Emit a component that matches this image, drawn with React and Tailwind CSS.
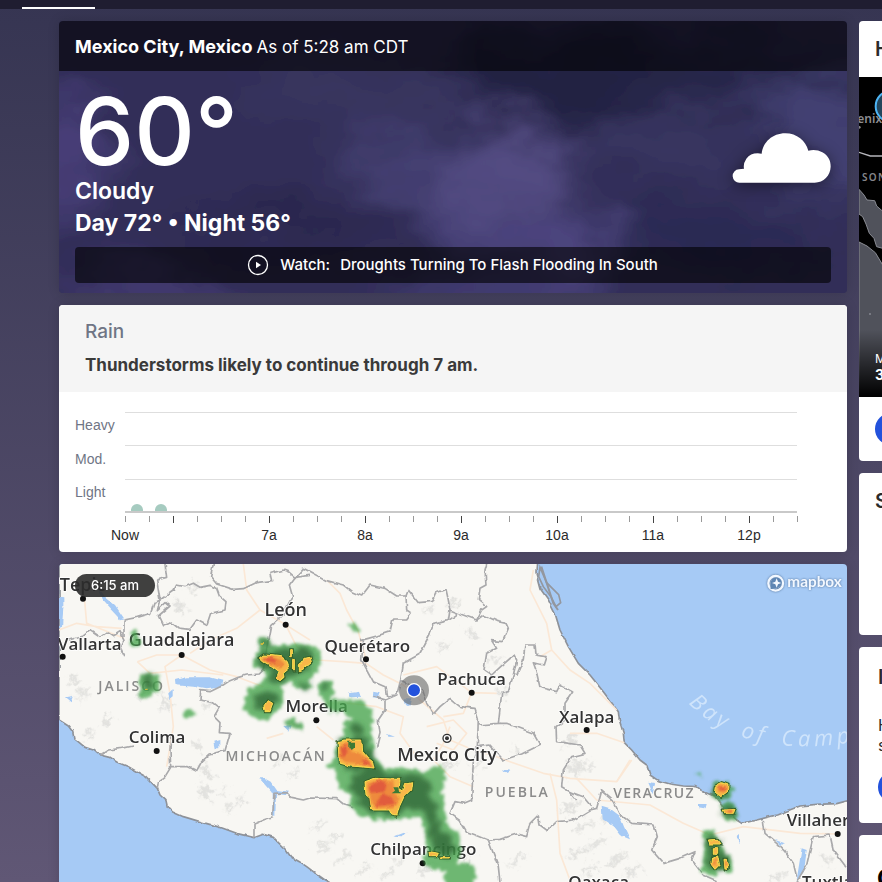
import React from "react";

const TICKS = Array.from({ length: 29 }, (_, i) => i);
const HOURS = [
  ["Now", 66],
  ["7a", 210],
  ["8a", 306],
  ["9a", 402],
  ["10a", 498],
  ["11a", 594],
  ["12p", 690],
];
const LEVELS = [
  ["Heavy", 38],
  ["Mod.", 72],
  ["Light", 105],
];

// [name, centre x, baseline, size]
const CITIES = [
  ["Tepic", 98, 92, 54],
  ["León", 707, 168, 54],
  ["Guadalajara", 395, 258, 54],
  ["Vallarta", 119, 271, 51],
  ["Querétaro", 952, 277, 51],
  ["Pachuca", 1265, 374, 51],
  ["Morella", 800, 457, 51],
  ["Colima", 321, 548, 51],
  ["Mexico City", 1191, 602, 54],
  ["Xalapa", 1610, 490, 51],
  ["Chilpancingo", 1120, 886, 51],
  ["Oaxaca", 1646, 984, 51],
];
const STATES = [
  ["JALISCO", 245, 392, 6],
  ["MICHOACÁN", 678, 602, 5],
  ["PUEBLA", 1402, 711, 6],
  ["VERACRUZ", 1812, 715, 4],
];
const DOTS = [
  [99, 116], [707, 194], [395, 285], [38, 290], [948, 298], [1265, 398],
  [799, 481], [320, 573], [1610, 510], [1118, 910], [2363, 822],
];

const LAND =
  "M27 0V480L55 498L68 515L72 535L88 548L105 562L130 570L150 585L178 592L200 606L235 620L262 636L290 652L322 685L330 705L348 722L352 740L368 756L400 770L450 785L510 802L560 820L612 833L640 823L670 832L685 848L708 870L722 890L748 905L770 920L790 935L825 960L880 990L1000 1040L1160 1100L1300 1180L1500 1240L1700 1320H2400V720L2360 731L2300 733L2250 738L2180 765L2120 780L2075 790L2060 780L2020 740L2000 712L1985 705L1960 695L1940 680L1900 678L1860 672L1825 662L1800 645L1790 615L1770 600L1745 570L1723 548L1720 520L1708 480L1705 455L1690 435L1660 395L1620 345L1585 310L1555 260L1530 210L1515 160L1495 120L1470 85L1458 40L1460 0Z";

const BORDERS = [
  "M222 290L210 262L222 238L210 215L190 228L172 216L150 232L120 212L100 228L60 240M222 228V180L262 172L302 160L312 130L330 120L322 152L348 128L360 138L325 168L338 195L362 186L385 204L420 208L440 180L470 196L482 160L525 150L528 125L508 108L500 86L480 76L450 82L430 70L405 80L380 75L372 90L330 120L320 60L350 52L345 12",
  "M490 12L482 50L500 72L550 88L580 86L618 68L665 62L660 40L700 30L716 36L735 52L780 46M735 52L718 75L728 110L700 165L662 200L655 235L640 330L628 342L590 345L565 352L540 362L515 378L480 395L452 392L450 420L490 428L508 442L492 470L510 488L508 518L540 520L525 572L480 582L455 605L440 632L415 620L362 620L360 570L362 530M362 622L345 650L325 665L322 685M150 585L175 570L215 565L250 558",
  "M612 833L612 792L640 780L668 770L672 700L712 698L722 712L760 720L780 714L860 716L880 732L910 740",
  "M735 52L760 25L830 62L880 75L905 95L935 108L960 75L1005 85L1040 108L1068 108L1075 90L1105 128L1148 124L1160 98L1188 88L1195 120L1200 150L1225 160L1280 180L1295 150L1310 140L1285 118L1290 85L1308 75L1305 30L1310 12",
  "M1068 108L1070 150L1085 160L1070 180L1028 180L1020 215L980 228L955 235L930 242M1200 150L1195 182L1148 194L1140 225L1110 282L1060 310L1052 360L1040 405L1010 408L1005 380L970 365L935 300L940 242",
  "M1052 360L1090 380L1118 390L1130 430L1150 462L1170 440L1200 415L1215 428L1230 440L1275 445L1285 478L1282 560L1270 600L1265 720L1242 730L1215 725L1200 760L1230 782L1250 815L1285 828L1315 840L1345 920L1350 966L1340 1200",
  "M1195 182L1225 160M1280 180L1300 165L1345 185L1368 190L1375 205L1358 245L1325 242L1340 265L1310 280L1302 330L1325 345L1352 320L1392 285L1400 300L1390 345L1375 395L1355 400L1350 445L1345 490L1285 495",
  "M1400 345L1420 298L1425 255L1455 255L1458 285L1488 290L1480 315L1450 308L1458 330L1470 382L1520 395L1530 375L1568 396L1545 430L1545 480L1518 500L1520 545L1590 555L1605 580L1565 590L1540 630L1535 680L1560 695L1580 720",
  "M1282 560L1320 555L1360 600L1415 582L1470 555L1450 520L1370 490L1345 490M1040 405L1005 420L1005 450L985 480L990 520L980 560M1005 420L970 410",
  "M1315 840L1350 838L1400 822L1430 830L1440 790L1465 765L1470 795L1492 812L1520 785L1570 780L1620 750L1640 745L1655 690L1690 720L1712 765L1745 790L1812 795L1822 830L1805 870L1840 910L1890 895L1935 875L1925 900L1960 945L2000 962",
  "M1560 695L1600 710L1625 740M2140 780L2145 820L2180 850L2205 875L2230 910L2240 950M2240 966L2270 915L2290 830L2340 825L2350 870L2391 925",
];

const ROADS = [
  "M27 210L80 190L140 200L215 205M100 80L110 190L222 235M262 305L320 285L395 285L480 330L560 350L640 380M395 285L345 320L360 400L370 500L350 620M580 12L590 90L630 150L560 205L480 240L420 280M630 150L700 190L780 240M262 305L300 340L395 330L520 345",
  "M707 194L740 260L800 300L880 305L948 310L1000 345L1060 375L1110 420L1180 480L1200 540M830 60L870 100L890 150L925 215L948 298M800 430L900 430L980 440L1060 470L1050 520L1100 590M700 520L650 535M800 500L850 540",
  "M1180 470L1240 460L1265 398L1340 400M1200 540L1270 570L1340 590L1380 605L1480 640L1560 655L1700 665L1740 600M1200 500L1180 550L1150 600L1200 650L1270 680M1130 500L1210 480L1250 520L1210 570L1160 550M1060 345L1160 320L1265 398",
  "M1450 30L1440 90L1490 190L1505 270L1560 330L1620 370L1700 450M1505 270L1470 290M1580 655L1640 720L1800 735L1900 790L1980 825L2080 800L2250 820L2363 822M1745 600L1700 665M1560 520L1640 520L1723 548M1500 640L1520 720L1530 880L1560 960",
];

const LAKES = [
  "M378 360L410 352H480L520 362L515 382L470 388L430 380L380 376Z",
  "M27 110L40 112V140L36 200L27 205Z",
  "M640 655L665 668L680 690L720 695L712 706L678 702L676 768L668 765V700L650 680L628 655Z",
  "M355 400L368 388V412L358 420Z",
  "M1655 740L1680 748L1710 770L1722 800L1740 838L1710 826L1690 800L1658 778Z",
  "M140 75L165 110L195 135L222 175L210 178L182 148L155 118Z",
  "M895 400L930 395L935 410L900 412ZM970 395L992 400L985 418L968 415ZM1030 830L1070 815L1055 832ZM1355 628L1382 632L1370 642ZM1946 732H1970L1966 748L1948 745ZM490 545L508 540V565H494ZM48 412L68 408L62 424ZM2175 840L2205 850L2190 855ZM2060 830L2070 822V850ZM700 498L725 495L718 515Z",
  "M1062 415H1084L1078 438L1068 432ZM1012 522L1035 530L1015 530ZM1795 668L1815 672L1808 700ZM2255 865L2270 870L2262 935L2240 960Z",
];

const HILLS = [
  [70, 360, 22, 9], [100, 400, 30, 8], [170, 480, 22, 10], [120, 520, 16, 8], [280, 400, 20, 10], [345, 425, 12, 30], [470, 640, 10, 28],
  [465, 700, 12, 26], [540, 745, 16, 8], [520, 690, 12, 6], [470, 440, 18, 8], [440, 560, 10, 16], [390, 140, 12, 26], [430, 85, 18, 8],
  [570, 720, 16, 6], [730, 640, 24, 8], [690, 600, 20, 8], [1210, 130, 18, 9], [1130, 150, 16, 7], [1265, 220, 10, 22],
  [1180, 255, 14, 8], [1330, 300, 20, 8], [1350, 400, 9, 18], [1280, 620, 24, 8], [1200, 615, 30, 8], [1400, 570, 12, 12],
  [1560, 540, 22, 12], [1570, 630, 12, 28], [1585, 610, 10, 20], [1560, 745, 28, 10], [1600, 800, 30, 9], [1640, 850, 34, 9], [1700, 900, 34, 10],
  [1580, 880, 30, 10], [1750, 930, 30, 10], [1620, 930, 26, 9], [820, 860, 24, 7], [880, 890, 30, 7], [940, 930, 30, 7], [1010, 940, 26, 7],
  [1050, 900, 20, 6], [1120, 930, 26, 8], [800, 800, 26, 6], [860, 830, 22, 6], [1250, 900, 16, 8], [1400, 900, 30, 8], [2180, 950, 30, 8],
  [2330, 900, 12, 18], [1620, 620, 18, 7], [1660, 780, 10, 6],
];

const RAIN_LIGHT =
  "M625 235L640 226L660 238L662 255L740 256L795 254L810 290L808 320L790 350L775 360L785 385L765 395L735 380L725 362L690 375L700 400L695 440L670 462L655 482L630 478L600 470L580 455L582 420L600 385L635 370L650 340L614 320L612 280L630 272ZM240 220L260 214L270 240L262 260L244 255ZM272 345L300 336L325 352L328 390L305 404L275 414L262 410L275 390L264 372ZM400 460L425 452L442 466L405 473ZM705 480L730 476L762 500L758 515L735 508L708 494Z" +
  "M898 192L915 188L932 208L928 216L902 206ZM800 370L840 362L850 395L838 420L900 418L938 424L965 450L970 480L960 510L965 545L975 590L1000 625L1080 622L1120 640L1148 628L1175 612L1185 650L1178 700L1188 770L1195 800L1228 815L1232 870L1225 910L1272 912L1276 966L1260 1010H1200L1182 960L1190 930L1145 925L1120 905L1132 840L1108 770L1040 778L990 782L930 770L895 735L910 710L862 675L858 630L825 620L850 590L862 550L880 530L882 490L905 478L890 455L840 460L820 420Z" +
  "M1932 640L1956 642L1948 650ZM1990 665H2035L2050 690L2035 712L2010 725L1988 705ZM2005 735L2040 728L2060 745L2065 775L2048 785L2025 770ZM1958 812L1985 805L2000 830L2015 850L2020 875L2042 890L2050 940L2020 935L1990 945L1955 935L1962 880L1965 840Z";

const RAIN_DARK =
  "M622 288L660 272L700 266L780 266L795 300L780 326L750 342L720 348L680 368L655 362L660 335L622 312ZM632 238L655 236L652 258L636 256ZM615 420L635 395L675 400L678 430L652 455L625 450ZM284 350L305 340L312 370L300 385L280 390ZM745 362L775 365L770 388L750 385ZM716 488L745 490L752 508ZM1030 645L1105 642L1130 665L1155 740L1170 810L1210 830L1208 870L1190 895L1155 870L1140 830L1128 760L1080 742L1050 764L980 762L935 740L915 715L900 690L905 650L940 635L885 622L865 595L868 540L945 530L955 560L975 610L1000 640ZM905 495L940 498L935 520L905 522ZM815 370L838 368L835 388L815 385ZM1998 672L2030 668L2038 695L2020 715L1995 700ZM2015 742L2052 740L2050 765L2020 765ZM1968 830L1990 820L2010 850L2012 870L2032 890L2038 925L2010 932L1975 930L1970 880Z";

const RAIN_YELLOW =
  "M628 294L640 285L660 286L695 290L712 305L718 325L700 340L702 352L690 362L680 355L688 335L665 318L640 305ZM722 266H727V290H722ZM728 298H733V330H728ZM748 318L765 295L780 292L784 305L760 325L748 332ZM642 440L655 422L668 430L660 452L645 452ZM864 545L885 540H935L938 575L955 595L968 605L972 624L930 620L900 618L868 610ZM945 665L975 655L1050 658L1048 682L1060 690L1068 672L1085 668L1082 690L1062 710L1048 740L1040 768L1025 765L1018 750L965 750L960 715L948 705ZM1140 875L1165 880L1160 890H1142ZM1172 890H1198V894H1172ZM1996 678L2015 668L2034 675L2032 695L2012 710L1994 695ZM2020 750L2055 748L2050 760L2025 760ZM1975 840L2000 838L2010 852L1980 852ZM1990 866H2003V880H1990ZM1988 890L2003 888L2008 915L1995 928L1985 915ZM2022 898H2032L2036 920L2025 928Z";

const RAIN_ORANGE =
  "M638 294L660 290L690 298L705 312L690 326L660 312ZM870 555L900 548L905 575L930 578L945 598L962 610L930 612L885 606L868 590ZM952 672L990 660L1030 664L1034 700L1050 715L1030 742L985 745L965 735L958 700ZM2004 676L2030 678L2024 698L2004 694ZM2026 751H2048L2042 758H2030ZM1992 895L2000 895L2001 915L1992 915ZM2025 905H2031V918H2025Z";

const RAIN_RED =
  "M640 296L660 292L680 300L675 308L655 306ZM872 565L888 556L892 578L878 590ZM935 600L950 598L970 620L945 612ZM955 680L985 662L1010 672L1002 696L965 698ZM1000 700L1025 712L1035 732L975 738ZM2010 680H2028L2022 690H2008ZM2030 752H2044L2038 757Z";

function Sky() {
  return (
    <svg className="absolute inset-0 h-full w-full" viewBox="0 0 788 272" preserveAspectRatio="none" aria-hidden="true">
      <defs>
        <filter id="cloud" x="-30%" y="-30%" width="160%" height="160%">
          <feGaussianBlur stdDeviation="18" result="b" />
          <feTurbulence type="fractalNoise" baseFrequency="0.011 0.018" numOctaves="5" seed="4" result="n" />
          <feDisplacementMap in="b" in2="n" scale="90" xChannelSelector="R" yChannelSelector="G" />
          <feGaussianBlur stdDeviation="2" />
        </filter>
      </defs>
      <rect width="788" height="272" fill="#322f58" />
      <g filter="url(#cloud)">
        <rect x="-80" y="-80" width="948" height="432" fill="#322f58" />
        <ellipse cx="540" cy="60" rx="170" ry="50" fill="#232342" />
        <ellipse cx="700" cy="50" rx="120" ry="26" fill="#27274a" />
        <ellipse cx="290" cy="70" rx="110" ry="30" fill="#39365f" />
        <ellipse cx="0" cy="135" rx="40" ry="60" fill="#463c77" />
        <ellipse cx="390" cy="150" rx="110" ry="40" fill="#444072" />
        <ellipse cx="445" cy="145" rx="60" ry="42" fill="#524c82" />
        <ellipse cx="600" cy="120" rx="90" ry="34" fill="#393661" />
        <ellipse cx="460" cy="215" rx="80" ry="28" fill="#49437a" />
        <ellipse cx="510" cy="235" rx="70" ry="18" fill="#4f4782" />
        <ellipse cx="765" cy="110" rx="60" ry="60" fill="#433f72" />
        <ellipse cx="660" cy="215" rx="110" ry="28" fill="#2a2a52" />
        <ellipse cx="240" cy="205" rx="120" ry="22" fill="#2a274d" />
        <ellipse cx="90" cy="280" rx="90" ry="22" fill="#443b73" />
        <ellipse cx="440" cy="280" rx="120" ry="16" fill="#47417a" />
      </g>
    </svg>
  );
}

function CurrentConditions() {
  return (
    <section className="relative overflow-hidden rounded text-white shadow-[0_0_12px_rgba(0,0,0,0.15)]">
      <Sky />
      <div className="relative">
        <header className="flex h-[50px] items-baseline gap-1 bg-black/60 px-4 pt-3">
          <h1 className="text-lg font-bold">Mexico City, Mexico</h1>
          <span className="text-[17px]">As of 5:28 am CDT</span>
        </header>
        <div className="flex items-center justify-between px-4 pt-4">
          <div>
            <div className="h-[88px] text-[94px] leading-[88px] font-medium">60°</div>
            <div className="h-8 text-[23px] leading-8 font-semibold">Cloudy</div>
            <div className="h-8 text-[23px] leading-8 font-bold">Day 72° • Night 56°</div>
          </div>
          <svg className="mb-2.5 h-[50px] w-[98px] overflow-visible drop-shadow-[0_2px_8px_rgba(0,0,0,0.45)]" viewBox="0 0 294 150" role="img" aria-label="Cloudy">
            <path
              fill="#fff"
              d="M20 149A20 20 0 0 1 18 109Q24 108 33 107Q30 92 40 77Q55 57 86 62C90 28 118 1 157 1C192 1 218 24 226 53Q250 48 268 58C286 68 293 83 293 101C292 128 272 148 245 149Z"
            />
          </svg>
        </div>
        <div className="px-4 pt-2 pb-2.5">
          <button type="button" className="flex h-9 w-full items-center justify-center rounded bg-black/60 text-[15px] font-medium">
            <svg className="h-5 w-5 overflow-visible" viewBox="0 0 20 20" aria-hidden="true">
              <circle cx="10" cy="10" r="9.5" fill="none" stroke="#fff" strokeWidth="1.3" />
              <path d="M8 6.8V13.2L13 10Z" fill="#fff" />
            </svg>
            <span className="ml-3">Watch:</span>
            <span className="ml-2.5">Droughts Turning To Flash Flooding In South</span>
          </button>
        </div>
      </div>
    </section>
  );
}

function RainCard() {
  return (
    <section className="overflow-hidden rounded bg-white shadow-[0_0_12px_rgba(0,0,0,0.15)]">
      <header className="h-[87px] bg-[#f5f5f5] px-[26px] pt-3">
        <h2 className="text-[19px] leading-[30px] font-medium text-[#6f7585]">Rain</h2>
        <p className="pt-1 text-[17px] leading-7 font-bold text-[#3a3a3a]">Thunderstorms likely to continue through 7 am.</p>
      </header>
      <svg className="block w-full font-['Liberation_Sans',Arial,sans-serif] text-sm" viewBox="0 0 788 160" role="img" aria-label="Rain intensity">
        <path d="M66 20.5H738M66 53.5H738M66 87.5H738" stroke="#dedede" />
        <path d="M72 121V118A6 6 0 0 1 84 118V121ZM96 121V118A6 6 0 0 1 108 118V121Z" fill="#a6cbc0" />
        <path d="M66 120H738" stroke="#c9c9c9" strokeWidth="2" />
        {TICKS.map((i) => (
          <path key={i} d={`M${66.5 + i * 24} 124V${i % 4 === 2 ? 131 : 130}`} stroke={i % 4 === 2 ? "#444" : "#999"} />
        ))}
        {LEVELS.map(([name, y]) => (
          <text key={name} x="16" y={y} fill="#6f7585">{name}</text>
        ))}
        {HOURS.map(([name, x]) => (
          <text key={name} x={x} y="148" textAnchor="middle" fill="#2b2b2b">{name}</text>
        ))}
      </svg>
    </section>
  );
}

function RadarMap() {
  return (
    <section className="relative shrink-0 overflow-hidden rounded-t bg-[#a6caf5] shadow-[0_0_12px_rgba(0,0,0,0.15)]">
      <svg className="block w-full" viewBox="27 12 2364 1308" role="img" aria-label="Radar map of central Mexico" fontFamily="'Open Sans', 'Noto Sans', sans-serif">
        <defs>
          <filter id="soft3"><feGaussianBlur stdDeviation="3" /></filter>
          <filter id="soft6"><feGaussianBlur stdDeviation="4" /></filter>
          <filter id="pixel" x="-5%" y="-5%" width="110%" height="110%">
            <feTurbulence type="fractalNoise" baseFrequency="0.05" numOctaves="2" seed="3" result="n" />
            <feDisplacementMap in="SourceGraphic" in2="n" scale="26" xChannelSelector="R" yChannelSelector="G" />
            <feGaussianBlur stdDeviation="5" />
          </filter>
          <filter id="core" x="-5%" y="-5%" width="110%" height="110%">
            <feTurbulence type="fractalNoise" baseFrequency="0.04" numOctaves="3" seed="5" result="n" />
            <feDisplacementMap in="SourceGraphic" in2="n" scale="44" xChannelSelector="R" yChannelSelector="G" />
            <feGaussianBlur stdDeviation="8" />
          </filter>
          <filter id="jag" x="-5%" y="-5%" width="110%" height="110%">
            <feTurbulence type="fractalNoise" baseFrequency="0.04" numOctaves="2" seed="9" result="n" />
            <feDisplacementMap in="SourceGraphic" in2="n" scale="12" xChannelSelector="R" yChannelSelector="G" />
          </filter>
          <filter id="terrain" x="-5%" y="-5%" width="110%" height="110%">
            <feTurbulence type="fractalNoise" baseFrequency="0.05" numOctaves="3" seed="12" result="n" />
            <feDisplacementMap in="SourceGraphic" in2="n" scale="60" xChannelSelector="R" yChannelSelector="G" />
          </filter>
          <filter id="coast" x="-5%" y="-5%" width="110%" height="110%">
            <feTurbulence type="fractalNoise" baseFrequency="0.04" numOctaves="2" seed="9" result="n" />
            <feDisplacementMap in="SourceGraphic" in2="n" scale="10" xChannelSelector="R" yChannelSelector="G" />
          </filter>
          <path id="bay" d="M1915 430Q2080 600 2420 545" />
        </defs>
        <path d={LAND} fill="#f8f7f3" stroke="#8e9299" strokeWidth="5" strokeLinejoin="round" filter="url(#coast)" />
        <path d="M1470 22L1490 68L1526 104L1532 128L1518 140L1504 112L1480 80L1466 50Z" fill="#a6caf5" stroke="#93979f" strokeWidth="5" />
        <path d="M1474 20L1510 130L1524 150" fill="none" stroke="#93979f" strokeWidth="6" />
        <g filter="url(#terrain)">
          <g filter="url(#soft6)" fill="#dcdcd9" opacity="0.8">
            {HILLS.map(([x, y, rx, ry]) => (
              <ellipse key={`${x}-${y}`} cx={x} cy={y} rx={rx} ry={ry} transform={`rotate(-35 ${x} ${y})`} />
            ))}
          </g>
        </g>
        <g fill="none" stroke="#fbe8d6" strokeWidth="5" strokeLinejoin="round">
          {ROADS.map((d) => <path key={d} d={d} />)}
        </g>
        <g filter="url(#jag)" fill="#a6caf5">
          {LAKES.map((d) => <path key={d} d={d} />)}
        </g>
        <g filter="url(#jag)" fill="none" stroke="#a9a9ab" strokeWidth="5" strokeLinejoin="round">
          {BORDERS.map((d) => <path key={d} d={d} />)}
        </g>
        <g fill="#8b8b8b" fontSize="42" fontWeight="600">
          {STATES.map(([name, x, y, gap]) => (
            <text key={name} x={x} y={y} textAnchor="middle" letterSpacing={gap} stroke="#f8f7f3" strokeWidth="4" paintOrder="stroke">{name}</text>
          ))}
        </g>
        <text fill="#cfe4fb" fontSize="66" fontStyle="italic" letterSpacing="12" wordSpacing="14">
          <textPath href="#bay">Bay of Campeche</textPath>
        </text>
        <g fill="#333" fontWeight="600" stroke="#fff" strokeWidth="5" paintOrder="stroke" strokeLinejoin="round">
          {CITIES.map(([name, x, y, size]) => (
            <text key={name} x={x} y={y} fontSize={size} textAnchor="middle">{name}</text>
          ))}
          <text x="2210" y="798" fontSize="51">Villahermosa</text>
          <text x="2256" y="984" fontSize="51">Tuxtla</text>
        </g>
        {DOTS.map(([x, y]) => <circle key={`${x}-${y}`} cx={x} cy={y} r="9" fill="#111" />)}
        <circle cx="1191" cy="535" r="12" fill="#fff" stroke="#333" strokeWidth="4" />
        <circle cx="1191" cy="535" r="6" fill="#333" />
        <path d={RAIN_LIGHT} fill="#46a64e" opacity="0.78" filter="url(#pixel)" />
        <path d={RAIN_DARK} fill="#2c5f31" opacity="0.72" filter="url(#core)" />
        <g filter="url(#jag)">
          <path d={RAIN_YELLOW} fill="#f8d34e" stroke="#35602c" strokeWidth="9" paintOrder="stroke" />
          <path d={RAIN_YELLOW} fill="#f8b748" stroke="#f5dd4f" strokeWidth="3" />
          <path d={RAIN_ORANGE} fill="#ee8a3c" filter="url(#soft3)" />
          <path d={RAIN_RED} fill="#df523c" opacity="0.85" filter="url(#soft3)" />
          <path d="M895 545H912V562L902 570L895 560ZM1030 682H1048L1052 700H1025L1035 692Z" fill="#3c7a35" />
          <path d="M288 386H293V390H288ZM635 246H642V252H635Z" fill="#c9b93f" />
        </g>
        <circle cx="1092" cy="391" r="45" fill="#666" opacity="0.6" />
        <circle cx="1092" cy="391" r="20" fill="#2352dc" stroke="#fff" strokeWidth="4" />
        <g className="drop-shadow-[0_0_3px_rgba(60,90,130,0.8)]">
          <circle cx="2177" cy="70" r="22" fill="none" stroke="#f3f8ff" strokeWidth="7" />
          <path d="M2162 87Q2158 60 2170 54Q2182 48 2191 57Q2200 68 2192 78Q2182 88 2162 87Z" fill="#f3f8ff" />
          <path d="M2162 87Q2158 60 2170 54Q2182 48 2191 57Q2200 68 2192 78Q2182 88 2162 87Z" fill="#5f86b4" />
          <path d="M2180 55L2184 65L2194 69L2184 73L2180 83L2176 73L2166 69L2176 65Z" fill="#f3f8ff" />
          <text x="2212" y="82" fontSize="46" fontWeight="700" fill="#f3f8ff" fontFamily="Lato, 'Open Sans', sans-serif">mapbox</text>
        </g>
      </svg>
      <div className="absolute top-2.5 left-4 flex h-[23px] w-20 items-center justify-center rounded-full bg-[#2b2b2b]/90 text-[13px] font-medium text-white">6:15 am</div>
    </section>
  );
}

function VideoMap() {
  return (
    <svg className="block h-80 w-[300px]" viewBox="51 231 900 960" role="img" aria-label="Storm map" fontFamily="'Noto Sans', sans-serif">
      <defs>
        <linearGradient id="fade" x1="0" y1="0" x2="0" y2="1">
          <stop offset="0" stopColor="#000" stopOpacity="0" />
          <stop offset="1" stopColor="#000" />
        </linearGradient>
      </defs>
      <rect x="51" y="231" width="900" height="960" fill="#000" />
      <path d="M51 568L66 585L75 600L98 602L104 618L120 632L160 660H951V1191H51V726L75 738L100 758L125 800L122 745L104 740L96 715L82 700L72 672L62 650L51 642Z" fill="#50525b" stroke="#8a8c94" strokeWidth="3" />
      <path d="M51 457L85 468H951" fill="none" stroke="#b5b5bb" strokeWidth="4" />
      <circle cx="84" cy="942" r="3" fill="#85878f" />
      <circle cx="52" cy="382" r="4" fill="#888" />
      <text x="46" y="368" fontSize="36" fontWeight="600" fill="#8d8d90">enix</text>
      <text x="60" y="543" fontSize="30" fontWeight="600" letterSpacing="4" fill="#85858a">SON</text>
      <rect x="51" y="990" width="900" height="201" fill="url(#fade)" />
      <circle cx="148" cy="319" r="47" fill="#24465c" stroke="#4db5f5" strokeWidth="6" />
    </svg>
  );
}

function Sidebar() {
  return (
    <aside className="-mr-[277px] flex w-[300px] shrink-0 flex-col gap-3 text-[#2b2b2b]">
      <section className="h-[440px] overflow-hidden rounded bg-white">
        <h2 className="flex h-14 items-center px-4 text-xl font-semibold">H</h2>
        <div className="relative">
          <VideoMap />
          <div className="absolute bottom-3.5 left-4 text-white">
            <div className="text-xs leading-4">M</div>
            <div className="text-sm leading-4 font-bold">3</div>
          </div>
        </div>
        <div className="px-4 pt-4">
          <button type="button" aria-label="Open" className="block h-8 w-40 rounded-full bg-[#2352dc]" />
        </div>
      </section>
      <section className="h-[162px] rounded bg-white px-4 pt-3.5">
        <h2 className="text-xl font-semibold">S</h2>
      </section>
      <section className="h-[176px] rounded bg-white px-[19px] pt-4">
        <h2 className="text-xl font-semibold">I</h2>
        <p className="pt-6 text-base leading-5">H<br />s</p>
        <button type="button" aria-label="More" className="mt-4 block h-8 w-40 rounded-full bg-[#2352dc]" />
      </section>
      <section className="h-[176px] rounded bg-white px-[18px] pt-7">
        <h2 className="text-2xl font-bold text-black">C</h2>
      </section>
    </aside>
  );
}

export default function App() {
  return (
    <div className="h-screen overflow-hidden bg-linear-to-b from-[#363552] to-[#605775] font-[Inter,sans-serif]">
      <nav className="flex h-[9px] items-end bg-[#1f1d31] pl-[22px]">
        <div className="h-0.5 w-[73px] bg-white" />
      </nav>
      <div className="flex gap-3 pt-3 pl-[59px]">
        <main className="flex min-w-0 flex-1 flex-col gap-3">
          <CurrentConditions />
          <RainCard />
          <RadarMap />
        </main>
        <Sidebar />
      </div>
    </div>
  );
}
